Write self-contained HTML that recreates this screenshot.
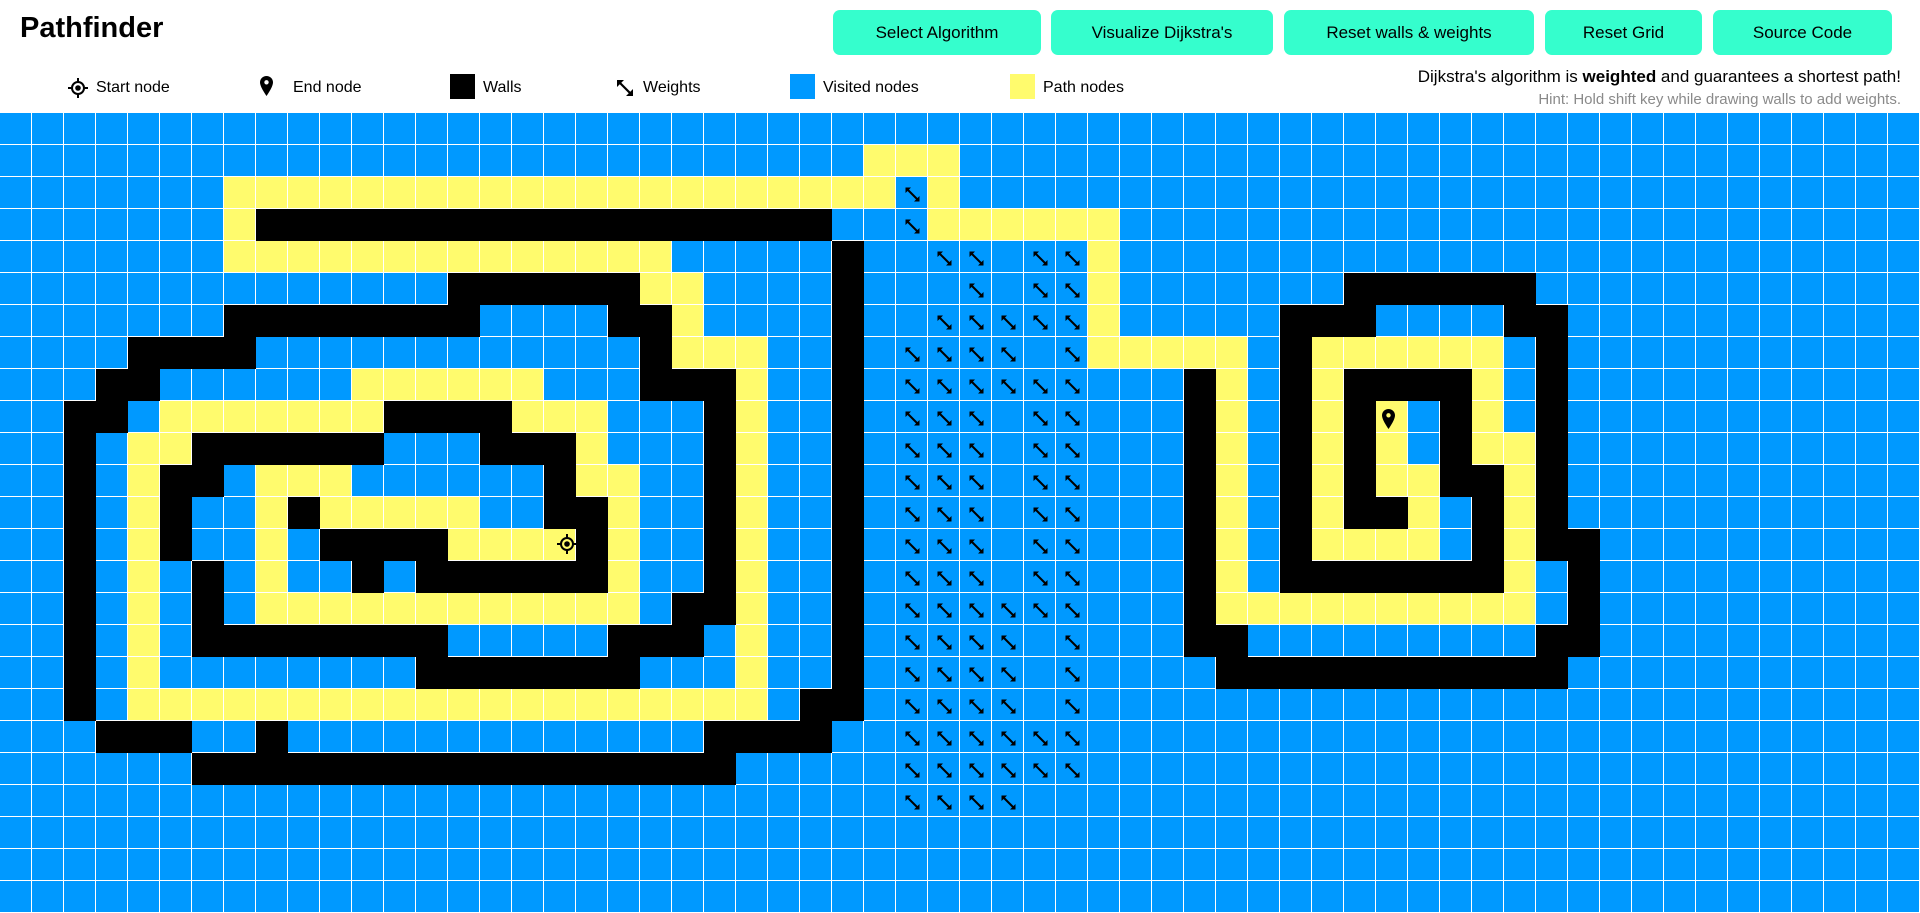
<!DOCTYPE html>
<html><head><meta charset="utf-8"><style>
*{margin:0;padding:0;box-sizing:border-box}
body{width:1920px;height:913px;overflow:hidden;background:#fff;font-family:"Liberation Sans",sans-serif;color:#000;position:relative}
.t{position:absolute;left:20px;top:12px;font-size:29px;font-weight:bold;letter-spacing:0px}
.b{position:absolute;top:10px;height:45px;background:#35fecd;border-radius:7px;font-size:17px;display:flex;align-items:center;justify-content:center}
.lg{position:absolute;top:79px;font-size:16px;line-height:18px}
.info{position:absolute;right:19px;top:67px;font-size:17px}
.hint{position:absolute;right:19px;top:91px;font-size:15px;color:#8a8a8a}
#g{position:absolute;left:0;top:113px;width:1920px;height:800px}
</style></head><body>
<div class="t">Pathfinder</div>
<div class="b" style="left:833px;width:208px">Select Algorithm</div>
<div class="b" style="left:1051px;width:222px">Visualize Dijkstra's</div>
<div class="b" style="left:1284px;width:250px">Reset walls &amp; weights</div>
<div class="b" style="left:1545px;width:157px">Reset Grid</div>
<div class="b" style="left:1713px;width:179px">Source Code</div>

<svg style="position:absolute;left:68px;top:78px" width="20" height="20" viewBox="0 0 20 20"><circle cx="10" cy="10" r="6" fill="none" stroke="#000" stroke-width="2"/><circle cx="10" cy="10" r="2.8"/><path d="M10 0V4M10 16V20M0 10H4M16 10H20" stroke="#000" stroke-width="2"/></svg>
<div class="lg" style="left:96px">Start node</div>
<svg style="position:absolute;left:260px;top:76px" width="13" height="20" viewBox="0 0 13 20"><path d="M6.5 0C2.9 0 0 2.8 0 6.4 0 11 6.5 20 6.5 20S13 11 13 6.4C13 2.8 10.1 0 6.5 0Z"/><circle cx="6.5" cy="6.3" r="2.2" fill="#fff"/></svg>
<div class="lg" style="left:293px">End node</div>
<div style="position:absolute;left:450px;top:74px;width:25px;height:25px;background:#000"></div>
<div class="lg" style="left:483px">Walls</div>
<svg style="position:absolute;left:616px;top:79px" width="18" height="18" viewBox="0 0 18 18"><path d="M3 3L15 15" stroke="#000" stroke-width="2.2"/><path d="M1 1H8L1 8Z M17 17H10L17 10Z"/></svg>
<div class="lg" style="left:643px">Weights</div>
<div style="position:absolute;left:790px;top:74px;width:25px;height:25px;background:#0099ff"></div>
<div class="lg" style="left:823px">Visited nodes</div>
<div style="position:absolute;left:1010px;top:74px;width:25px;height:25px;background:#fffb6d"></div>
<div class="lg" style="left:1043px">Path nodes</div>
<div class="info">Dijkstra's algorithm is <b>weighted</b> and guarantees a shortest path!</div>
<div class="hint">Hint: Hold shift key while drawing walls to add weights.</div>

<svg id="g" viewBox="0 0 1920 800" xmlns="http://www.w3.org/2000/svg">
<defs>
<pattern id="gl" width="32" height="32" patternUnits="userSpaceOnUse"><rect x="31" y="0" width="1" height="32" fill="#fff"/><rect x="0" y="31" width="32" height="1" fill="#fff"/></pattern>
<symbol id="w" viewBox="0 0 32 32"><path d="M12 13L21 22" stroke="#000" stroke-width="2"/><path d="M9.5 10.5H15L9.5 16Z M23.5 24.5H18L23.5 19Z"/></symbol>
</defs>
<rect width="1920" height="800" fill="#0099ff"/>
<g fill="#fffb6d">
<rect x="864" y="32" width="96" height="32"/>
<rect x="224" y="64" width="672" height="32"/><rect x="928" y="64" width="32" height="32"/>
<rect x="224" y="96" width="32" height="32"/><rect x="928" y="96" width="192" height="32"/>
<rect x="224" y="128" width="448" height="32"/><rect x="1088" y="128" width="32" height="32"/>
<rect x="640" y="160" width="64" height="32"/><rect x="1088" y="160" width="32" height="32"/>
<rect x="672" y="192" width="32" height="32"/><rect x="1088" y="192" width="32" height="32"/>
<rect x="672" y="224" width="96" height="32"/><rect x="1088" y="224" width="160" height="32"/><rect x="1312" y="224" width="192" height="32"/>
<rect x="352" y="256" width="192" height="32"/><rect x="736" y="256" width="32" height="32"/><rect x="1216" y="256" width="32" height="32"/><rect x="1312" y="256" width="32" height="32"/><rect x="1472" y="256" width="32" height="32"/>
<rect x="160" y="288" width="224" height="32"/><rect x="512" y="288" width="96" height="32"/><rect x="736" y="288" width="32" height="32"/><rect x="1216" y="288" width="32" height="32"/><rect x="1312" y="288" width="32" height="32"/><rect x="1376" y="288" width="32" height="32"/><rect x="1472" y="288" width="32" height="32"/>
<rect x="128" y="320" width="64" height="32"/><rect x="576" y="320" width="32" height="32"/><rect x="736" y="320" width="32" height="32"/><rect x="1216" y="320" width="32" height="32"/><rect x="1312" y="320" width="32" height="32"/><rect x="1376" y="320" width="32" height="32"/><rect x="1472" y="320" width="64" height="32"/>
<rect x="128" y="352" width="32" height="32"/><rect x="256" y="352" width="96" height="32"/><rect x="576" y="352" width="64" height="32"/><rect x="736" y="352" width="32" height="32"/><rect x="1216" y="352" width="32" height="32"/><rect x="1312" y="352" width="32" height="32"/><rect x="1376" y="352" width="64" height="32"/><rect x="1504" y="352" width="32" height="32"/>
<rect x="128" y="384" width="32" height="32"/><rect x="256" y="384" width="32" height="32"/><rect x="320" y="384" width="160" height="32"/><rect x="608" y="384" width="32" height="32"/><rect x="736" y="384" width="32" height="32"/><rect x="1216" y="384" width="32" height="32"/><rect x="1312" y="384" width="32" height="32"/><rect x="1408" y="384" width="32" height="32"/><rect x="1504" y="384" width="32" height="32"/>
<rect x="128" y="416" width="32" height="32"/><rect x="256" y="416" width="32" height="32"/><rect x="448" y="416" width="128" height="32"/><rect x="608" y="416" width="32" height="32"/><rect x="736" y="416" width="32" height="32"/><rect x="1216" y="416" width="32" height="32"/><rect x="1312" y="416" width="128" height="32"/><rect x="1504" y="416" width="32" height="32"/>
<rect x="128" y="448" width="32" height="32"/><rect x="256" y="448" width="32" height="32"/><rect x="608" y="448" width="32" height="32"/><rect x="736" y="448" width="32" height="32"/><rect x="1216" y="448" width="32" height="32"/><rect x="1504" y="448" width="32" height="32"/>
<rect x="128" y="480" width="32" height="32"/><rect x="256" y="480" width="384" height="32"/><rect x="736" y="480" width="32" height="32"/><rect x="1216" y="480" width="320" height="32"/>
<rect x="128" y="512" width="32" height="32"/><rect x="736" y="512" width="32" height="32"/>
<rect x="128" y="544" width="32" height="32"/><rect x="736" y="544" width="32" height="32"/>
<rect x="128" y="576" width="640" height="32"/>
</g>
<rect width="1920" height="800" fill="url(#gl)"/>
<g fill="#000">
<rect x="256" y="96" width="576" height="32"/>
<rect x="832" y="128" width="32" height="32"/>
<rect x="448" y="160" width="192" height="32"/><rect x="832" y="160" width="32" height="32"/><rect x="1344" y="160" width="192" height="32"/>
<rect x="224" y="192" width="256" height="32"/><rect x="608" y="192" width="64" height="32"/><rect x="832" y="192" width="32" height="32"/><rect x="1280" y="192" width="96" height="32"/><rect x="1504" y="192" width="64" height="32"/>
<rect x="128" y="224" width="128" height="32"/><rect x="640" y="224" width="32" height="32"/><rect x="832" y="224" width="32" height="32"/><rect x="1280" y="224" width="32" height="32"/><rect x="1536" y="224" width="32" height="32"/>
<rect x="96" y="256" width="64" height="32"/><rect x="640" y="256" width="96" height="32"/><rect x="832" y="256" width="32" height="32"/><rect x="1184" y="256" width="32" height="32"/><rect x="1280" y="256" width="32" height="32"/><rect x="1344" y="256" width="128" height="32"/><rect x="1536" y="256" width="32" height="32"/>
<rect x="64" y="288" width="64" height="32"/><rect x="384" y="288" width="128" height="32"/><rect x="704" y="288" width="32" height="32"/><rect x="832" y="288" width="32" height="32"/><rect x="1184" y="288" width="32" height="32"/><rect x="1280" y="288" width="32" height="32"/><rect x="1344" y="288" width="32" height="32"/><rect x="1440" y="288" width="32" height="32"/><rect x="1536" y="288" width="32" height="32"/>
<rect x="64" y="320" width="32" height="32"/><rect x="192" y="320" width="192" height="32"/><rect x="480" y="320" width="96" height="32"/><rect x="704" y="320" width="32" height="32"/><rect x="832" y="320" width="32" height="32"/><rect x="1184" y="320" width="32" height="32"/><rect x="1280" y="320" width="32" height="32"/><rect x="1344" y="320" width="32" height="32"/><rect x="1440" y="320" width="32" height="32"/><rect x="1536" y="320" width="32" height="32"/>
<rect x="64" y="352" width="32" height="32"/><rect x="160" y="352" width="64" height="32"/><rect x="544" y="352" width="32" height="32"/><rect x="704" y="352" width="32" height="32"/><rect x="832" y="352" width="32" height="32"/><rect x="1184" y="352" width="32" height="32"/><rect x="1280" y="352" width="32" height="32"/><rect x="1344" y="352" width="32" height="32"/><rect x="1440" y="352" width="64" height="32"/><rect x="1536" y="352" width="32" height="32"/>
<rect x="64" y="384" width="32" height="32"/><rect x="160" y="384" width="32" height="32"/><rect x="288" y="384" width="32" height="32"/><rect x="544" y="384" width="64" height="32"/><rect x="704" y="384" width="32" height="32"/><rect x="832" y="384" width="32" height="32"/><rect x="1184" y="384" width="32" height="32"/><rect x="1280" y="384" width="32" height="32"/><rect x="1344" y="384" width="64" height="32"/><rect x="1472" y="384" width="32" height="32"/><rect x="1536" y="384" width="32" height="32"/>
<rect x="64" y="416" width="32" height="32"/><rect x="160" y="416" width="32" height="32"/><rect x="320" y="416" width="128" height="32"/><rect x="576" y="416" width="32" height="32"/><rect x="704" y="416" width="32" height="32"/><rect x="832" y="416" width="32" height="32"/><rect x="1184" y="416" width="32" height="32"/><rect x="1280" y="416" width="32" height="32"/><rect x="1472" y="416" width="32" height="32"/><rect x="1536" y="416" width="64" height="32"/>
<rect x="64" y="448" width="32" height="32"/><rect x="192" y="448" width="32" height="32"/><rect x="352" y="448" width="32" height="32"/><rect x="416" y="448" width="192" height="32"/><rect x="704" y="448" width="32" height="32"/><rect x="832" y="448" width="32" height="32"/><rect x="1184" y="448" width="32" height="32"/><rect x="1280" y="448" width="224" height="32"/><rect x="1568" y="448" width="32" height="32"/>
<rect x="64" y="480" width="32" height="32"/><rect x="192" y="480" width="32" height="32"/><rect x="672" y="480" width="64" height="32"/><rect x="832" y="480" width="32" height="32"/><rect x="1184" y="480" width="32" height="32"/><rect x="1568" y="480" width="32" height="32"/>
<rect x="64" y="512" width="32" height="32"/><rect x="192" y="512" width="256" height="32"/><rect x="608" y="512" width="96" height="32"/><rect x="832" y="512" width="32" height="32"/><rect x="1184" y="512" width="64" height="32"/><rect x="1536" y="512" width="64" height="32"/>
<rect x="64" y="544" width="32" height="32"/><rect x="416" y="544" width="224" height="32"/><rect x="832" y="544" width="32" height="32"/><rect x="1216" y="544" width="352" height="32"/>
<rect x="64" y="576" width="32" height="32"/><rect x="800" y="576" width="64" height="32"/>
<rect x="96" y="608" width="96" height="32"/><rect x="256" y="608" width="32" height="32"/><rect x="704" y="608" width="128" height="32"/>
<rect x="192" y="640" width="544" height="32"/>
</g>
<g>
<use href="#w" x="896" y="64" width="32" height="32"/>
<use href="#w" x="896" y="96" width="32" height="32"/>
<use href="#w" x="928" y="128" width="32" height="32"/><use href="#w" x="960" y="128" width="32" height="32"/><use href="#w" x="1024" y="128" width="32" height="32"/><use href="#w" x="1056" y="128" width="32" height="32"/>
<use href="#w" x="960" y="160" width="32" height="32"/><use href="#w" x="1024" y="160" width="32" height="32"/><use href="#w" x="1056" y="160" width="32" height="32"/>
<use href="#w" x="928" y="192" width="32" height="32"/><use href="#w" x="960" y="192" width="32" height="32"/><use href="#w" x="992" y="192" width="32" height="32"/><use href="#w" x="1024" y="192" width="32" height="32"/><use href="#w" x="1056" y="192" width="32" height="32"/>
<use href="#w" x="896" y="224" width="32" height="32"/><use href="#w" x="928" y="224" width="32" height="32"/><use href="#w" x="960" y="224" width="32" height="32"/><use href="#w" x="992" y="224" width="32" height="32"/><use href="#w" x="1056" y="224" width="32" height="32"/>
<use href="#w" x="896" y="256" width="32" height="32"/><use href="#w" x="928" y="256" width="32" height="32"/><use href="#w" x="960" y="256" width="32" height="32"/><use href="#w" x="992" y="256" width="32" height="32"/><use href="#w" x="1024" y="256" width="32" height="32"/><use href="#w" x="1056" y="256" width="32" height="32"/>
<use href="#w" x="896" y="288" width="32" height="32"/><use href="#w" x="928" y="288" width="32" height="32"/><use href="#w" x="960" y="288" width="32" height="32"/><use href="#w" x="1024" y="288" width="32" height="32"/><use href="#w" x="1056" y="288" width="32" height="32"/>
<use href="#w" x="896" y="320" width="32" height="32"/><use href="#w" x="928" y="320" width="32" height="32"/><use href="#w" x="960" y="320" width="32" height="32"/><use href="#w" x="1024" y="320" width="32" height="32"/><use href="#w" x="1056" y="320" width="32" height="32"/>
<use href="#w" x="896" y="352" width="32" height="32"/><use href="#w" x="928" y="352" width="32" height="32"/><use href="#w" x="960" y="352" width="32" height="32"/><use href="#w" x="1024" y="352" width="32" height="32"/><use href="#w" x="1056" y="352" width="32" height="32"/>
<use href="#w" x="896" y="384" width="32" height="32"/><use href="#w" x="928" y="384" width="32" height="32"/><use href="#w" x="960" y="384" width="32" height="32"/><use href="#w" x="1024" y="384" width="32" height="32"/><use href="#w" x="1056" y="384" width="32" height="32"/>
<use href="#w" x="896" y="416" width="32" height="32"/><use href="#w" x="928" y="416" width="32" height="32"/><use href="#w" x="960" y="416" width="32" height="32"/><use href="#w" x="1024" y="416" width="32" height="32"/><use href="#w" x="1056" y="416" width="32" height="32"/>
<use href="#w" x="896" y="448" width="32" height="32"/><use href="#w" x="928" y="448" width="32" height="32"/><use href="#w" x="960" y="448" width="32" height="32"/><use href="#w" x="1024" y="448" width="32" height="32"/><use href="#w" x="1056" y="448" width="32" height="32"/>
<use href="#w" x="896" y="480" width="32" height="32"/><use href="#w" x="928" y="480" width="32" height="32"/><use href="#w" x="960" y="480" width="32" height="32"/><use href="#w" x="992" y="480" width="32" height="32"/><use href="#w" x="1024" y="480" width="32" height="32"/><use href="#w" x="1056" y="480" width="32" height="32"/>
<use href="#w" x="896" y="512" width="32" height="32"/><use href="#w" x="928" y="512" width="32" height="32"/><use href="#w" x="960" y="512" width="32" height="32"/><use href="#w" x="992" y="512" width="32" height="32"/><use href="#w" x="1056" y="512" width="32" height="32"/>
<use href="#w" x="896" y="544" width="32" height="32"/><use href="#w" x="928" y="544" width="32" height="32"/><use href="#w" x="960" y="544" width="32" height="32"/><use href="#w" x="992" y="544" width="32" height="32"/><use href="#w" x="1056" y="544" width="32" height="32"/>
<use href="#w" x="896" y="576" width="32" height="32"/><use href="#w" x="928" y="576" width="32" height="32"/><use href="#w" x="960" y="576" width="32" height="32"/><use href="#w" x="992" y="576" width="32" height="32"/><use href="#w" x="1056" y="576" width="32" height="32"/>
<use href="#w" x="896" y="608" width="32" height="32"/><use href="#w" x="928" y="608" width="32" height="32"/><use href="#w" x="960" y="608" width="32" height="32"/><use href="#w" x="992" y="608" width="32" height="32"/><use href="#w" x="1024" y="608" width="32" height="32"/><use href="#w" x="1056" y="608" width="32" height="32"/>
<use href="#w" x="896" y="640" width="32" height="32"/><use href="#w" x="928" y="640" width="32" height="32"/><use href="#w" x="960" y="640" width="32" height="32"/><use href="#w" x="992" y="640" width="32" height="32"/><use href="#w" x="1024" y="640" width="32" height="32"/><use href="#w" x="1056" y="640" width="32" height="32"/>
<use href="#w" x="896" y="672" width="32" height="32"/><use href="#w" x="928" y="672" width="32" height="32"/><use href="#w" x="960" y="672" width="32" height="32"/><use href="#w" x="992" y="672" width="32" height="32"/>
</g>
<g transform="translate(552,416)"><circle cx="15" cy="15" r="6" fill="none" stroke="#000" stroke-width="2"/><circle cx="15" cy="15" r="2.8"/><path d="M15 5V9M15 21V25M5 15H9M21 15H25" stroke="#000" stroke-width="2"/></g>
<g transform="translate(1382,296)"><path d="M6.5 0C2.9 0 0 2.8 0 6.4 0 11 6.5 20 6.5 20S13 11 13 6.4C13 2.8 10.1 0 6.5 0Z"/><circle cx="6.5" cy="6.3" r="2.2" fill="#fffb6d"/></g>
</svg>
</body></html>
